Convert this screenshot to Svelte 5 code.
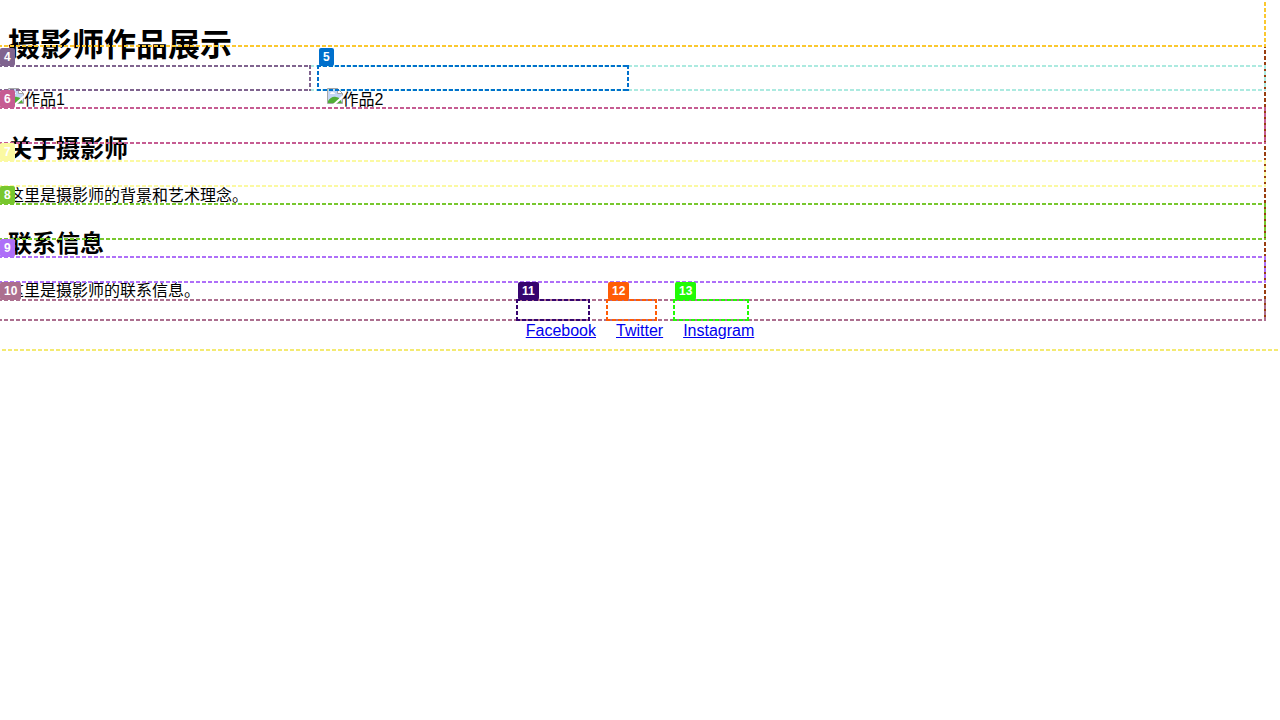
<script>
  const works = ['作品1', '作品2'];
  const links = ['Facebook', 'Twitter', 'Instagram'];

  // Element outlines on the annotation canvas: x, y, width, height, colour, label
  const marks = [
    { x: -10, y: -10, w: 1300, h: 361, color: '#f4ea72' },
    { x: -2, y: -10, w: 1268, h: 331, color: '#993d0f' },
    { x: -2, y: -10, w: 1268, h: 57, color: '#fbc82f' },
    { x: -2, y: 65, w: 1268, h: 26, color: '#aceae0' },
    { x: -2, y: 65, w: 313, h: 26, color: '#80648f', label: '4' },
    { x: 317, y: 65, w: 312, h: 26, color: '#0070cc', label: '5' },
    { x: -2, y: 107, w: 1268, h: 37, color: '#c65c92', label: '6' },
    { x: -2, y: 160, w: 1268, h: 27, color: '#fbf9a2', label: '7' },
    { x: -2, y: 203, w: 1268, h: 37, color: '#78c72e', label: '8' },
    { x: -2, y: 256, w: 1268, h: 27, color: '#ae6ff8', label: '9' },
    { x: -2, y: 299, w: 1268, h: 22, color: '#ac6f8f', label: '10' },
    { x: 516, y: 299, w: 74, h: 22, color: '#37046f', label: '11' },
    { x: 606, y: 299, w: 51, h: 22, color: '#ff5c05', label: '12' },
    { x: 673, y: 299, w: 76, h: 22, color: '#22fb05', label: '13' }
  ];
</script>

<div class="page">
  <h1>摄影师作品展示</h1>

  <div class="gallery">
    {#each works as work}
      <div class="work">
        <svg class="thumb" viewBox="0 0 16 16" aria-hidden="true">
          <path d="M1 1h10l4 4v10H1z" fill="#c3d6f5" />
          <path d="M3 6c0-1 1-2 2-2 2 0 3 1 3 2z" fill="#fff" />
          <path d="M1 15v-2c2-3 5-5 8-4 3 0 5 3 6 6z" fill="#50ad36" />
          <path d="M.5 15.500V.5h10l5 5v10z" fill="none" stroke="#a7a7a7" />
          <path d="M10.500 .5v5h5z" fill="#fff" stroke="#a7a7a7" />
          <path d="M16 7v3l-7 6H6z" fill="#fff" />
        </svg>
        <span>{work}</span>
      </div>
    {/each}
  </div>

  <section>
    <h2>关于摄影师</h2>
    <p>这里是摄影师的背景和艺术理念。</p>
  </section>

  <section>
    <h2>联系信息</h2>
    <p>这里是摄影师的联系信息。</p>
  </section>

  <footer>
    {#each links as link}
      <a href="#{link.toLowerCase()}">{link}</a>
    {/each}
  </footer>
</div>

<div class="overlay">
  <svg class="marks" aria-hidden="true">
    {#each marks as m}
      {@const left = m.x + 1}
      {@const top = m.y + 1}
      {@const right = m.x + m.w - 1}
      {@const bottom = m.y + m.h - 1}
      <path
        d="M{m.x} {top}H{right + 1}M{m.x} {bottom}H{right + 1}M{left} {m.y}V{bottom + 1}M{right} {m.y}V{bottom + 1}"
        stroke={m.color}
      />
    {/each}
  </svg>
  {#each marks.filter((m) => m.label) as m}
    <span class="label" style="left:{m.x + 2}px;top:{m.y - 17}px;--mark:{m.color}">{m.label}</span>
  {/each}
</div>

<style>
  :global(body) {
    margin: 0;
    background: #fff;
    color: #000;
    font: 16px "Liberation Sans", "Noto Sans CJK SC", sans-serif;
  }
  .page {
    padding: 22px 8px 8px;
  }
  h1 {
    margin: 0 0 20px;
    font-size: 32px;
    line-height: 46px;
  }
  .gallery {
    display: grid;
    grid-template-columns: repeat(auto-fill, minmax(300px, 1fr));
    gap: 10px;
  }
  .work {
    display: flex;
    height: 24px;
    line-height: 24px;
  }
  .thumb {
    width: 16px;
    height: 16px;
  }
  h2 {
    margin: 20px 0 18px;
    font-size: 24px;
    line-height: 34px;
  }
  p {
    margin: 0;
    line-height: 23px;
  }
  footer {
    display: flex;
    justify-content: center;
    gap: 20px;
    margin-top: 20px;
    line-height: 18px;
  }
  a {
    color: #0000ee;
  }
  .overlay {
    position: absolute;
    inset: 0;
    overflow: hidden;
    pointer-events: none;
  }
  .marks {
    display: block;
    width: 100%;
    height: 100%;
    fill: none;
    stroke-width: 2;
    stroke-dasharray: 4 2;
  }
  .label {
    position: absolute;
    padding: 2px 4px;
    border-radius: 2px;
    background: var(--mark);
    color: #fff;
    font-size: 12px;
    font-weight: bold;
    line-height: 14px;
  }
</style>
